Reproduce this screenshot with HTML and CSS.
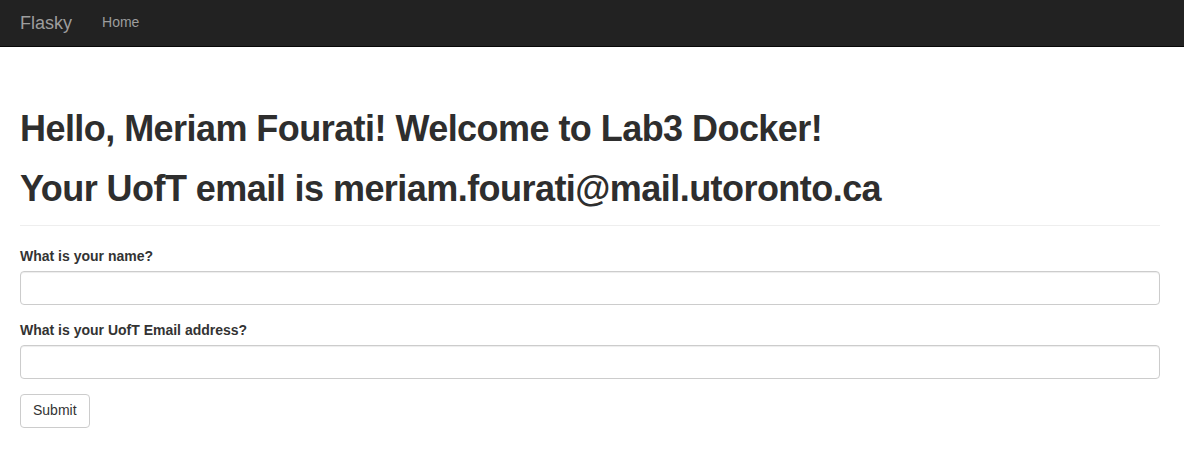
FILE: index.html
```html
<!DOCTYPE html>
<html lang="en">
<head>
<meta charset="utf-8">
<title>Flasky</title>
<link rel="stylesheet" href="styles.css">
</head>
<body>
<nav class="navbar">
  <a class="brand" href="#">Flasky</a>
  <ul class="nav">
    <li><a href="#">Home</a></li>
  </ul>
</nav>
<main class="container">
  <div class="page-header">
    <h1>Hello, Meriam Fourati! Welcome to Lab3 Docker!</h1>
    <h1>Your UofT email is meriam.fourati@mail.utoronto.ca</h1>
  </div>
  <form class="form">
    <div class="form-group">
      <label for="name">What is your name?</label>
      <input id="name" class="form-control" type="text">
    </div>
    <div class="form-group">
      <label for="email">What is your UofT Email address?</label>
      <input id="email" class="form-control" type="text">
    </div>
    <button class="btn" type="submit">Submit</button>
  </form>
</main>
</body>
</html>
```
FILE: styles.css
```css
* { box-sizing: border-box; }
html, body { margin: 0; }
body {
  font-family: "Liberation Sans", Arial, sans-serif;
  font-size: 14px;
  line-height: 1.42857;
  color: #333;
  background: #fff;
}
.navbar {
  height: 47px;
  background: #222;
  border-bottom: 1px solid #080808;
  display: flex;
  align-items: center;
  padding: 0 20px;
}
.brand {
  color: #9d9d9d;
  font-size: 18px;
  text-decoration: none;
  line-height: 20px;
}
.nav {
  list-style: none;
  margin: 0 0 0 30px;
  padding: 0;
  display: flex;
}
.nav a {
  color: #9d9d9d;
  text-decoration: none;
  font-size: 14px;
}
.container {
  padding: 0 24px 0 20px;
}
.page-header {
  margin-top: 62px;
  padding-bottom: 16px;
  border-bottom: 1px solid #eee;
}
h1 {
  font-size: 36px;
  font-weight: 700;
  line-height: 40px;
  letter-spacing: -0.55px;
  color: #2e2e2e;
  margin: 0 0 20px;
}
h1:last-child { margin-bottom: 0; }
.form { margin-top: 20px; }
.form-group { margin-bottom: 15px; }
label {
  display: block;
  font-weight: 700;
  font-size: 14px;
  line-height: 20px;
  margin-bottom: 5px;
}
.form-control {
  display: block;
  width: 100%;
  height: 34px;
  border: 1px solid #ccc;
  border-radius: 4px;
  padding: 6px 12px;
  font: inherit;
  box-shadow: inset 0 1px 1px rgba(0,0,0,.075);
}
.btn {
  height: 34px;
  padding: 0 12px;
  font: inherit;
  font-size: 14px;
  color: #333;
  background: #fff;
  border: 1px solid #ccc;
  border-radius: 4px;
}
```
